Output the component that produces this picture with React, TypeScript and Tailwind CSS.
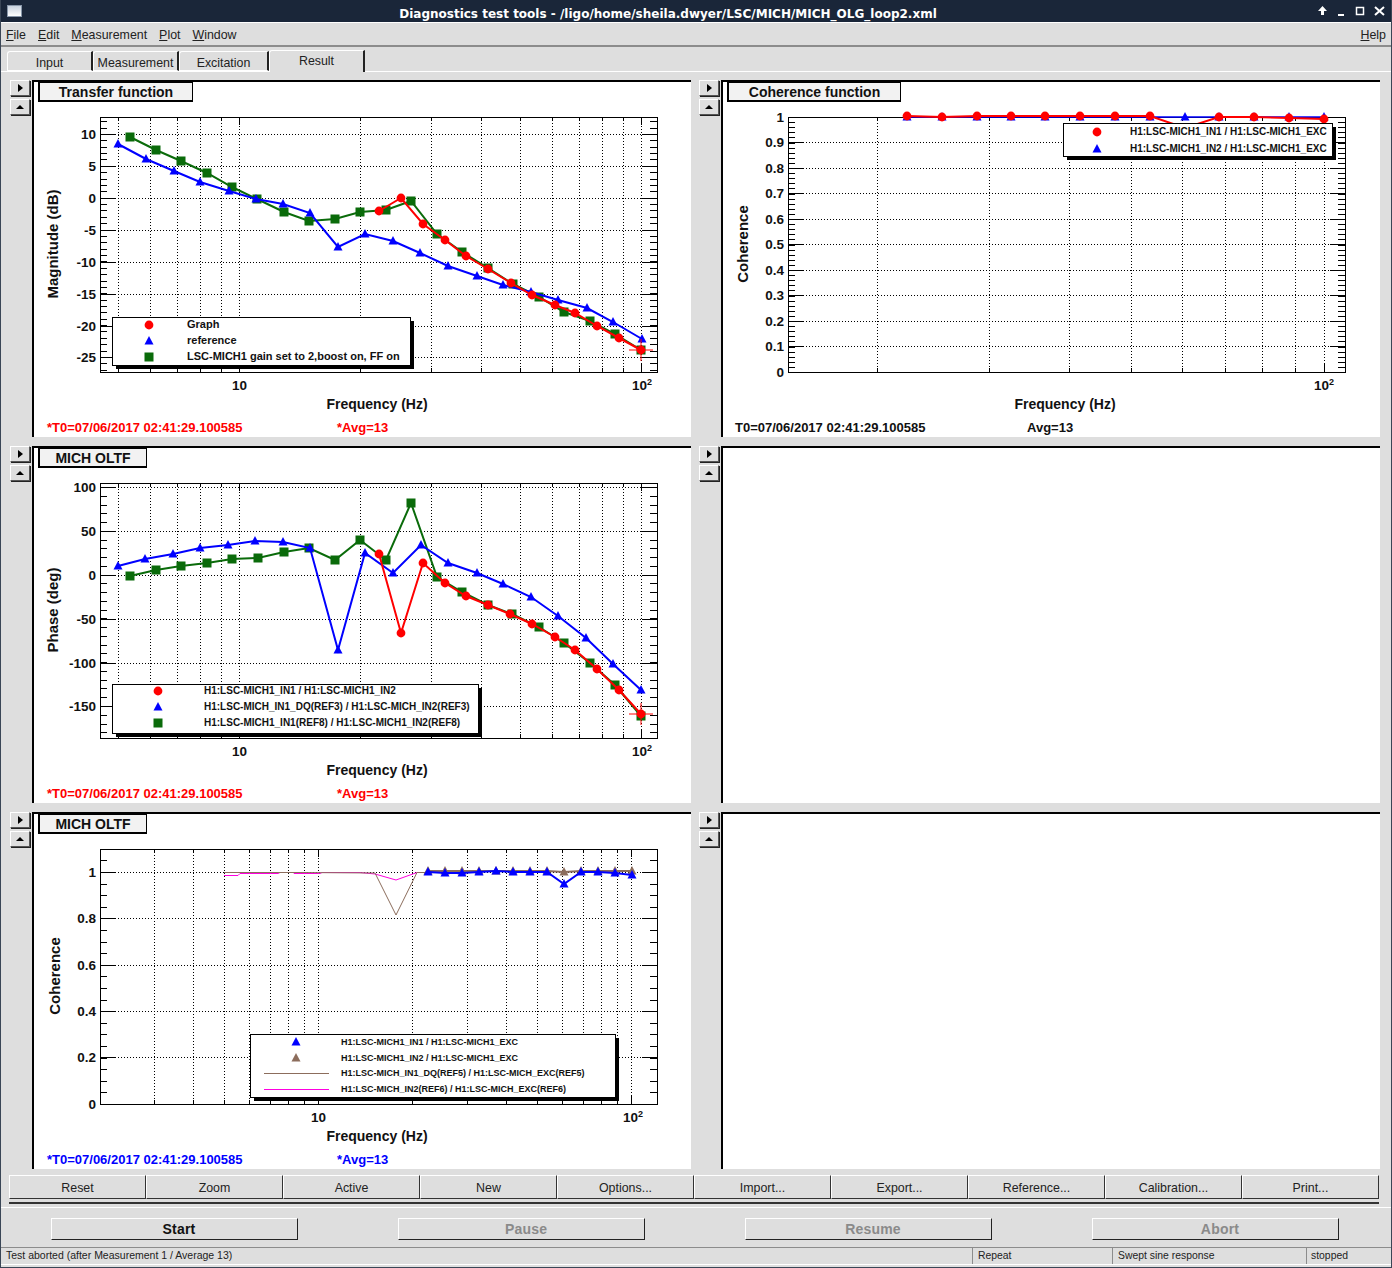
import React from "react"

type Pt = [number, number]
type Series = { color: string; points: Pt[]; marker?: "circle" | "triangle" | "square"; width?: number; cross?: boolean }
type LegendItem = { color: string; marker?: "circle" | "triangle" | "square"; text: string; y: number }

type ChartProps = {
  x0: number
  y0: number
  frameX: number
  frameY: number
  xVals: number[]
  x10: number
  decade: number
  xMajor: number[]
  yMajor: { y: number; label: string }[]
  ySub: number
  yTitle: string
  yTitleX: number
  xLabels: { x: number; y: number; text: string; sup?: boolean }[]
  xTitle: [number, number]
  series: Series[]
  legend: { x: number; y: number; w: number; h: number; markerX: number; textX: number; size: number; items: LegendItem[]; lines?: { y: number; color: string; text: string }[] }
  status: { color: string; t0: string; avg: string; t0X: number; avgX: number; y: number }
}

const W = 557
const H = 255

const Marker = ({ kind, x, y, color }: { kind?: string; x: number; y: number; color: string }) => {
  if (kind === "circle") return <circle cx={x} cy={y} r={4.4} fill={color} />
  if (kind === "square") return <rect x={x - 4.5} y={y - 4.5} width={9} height={9} fill={color} />
  if (kind === "triangle") return <polygon points={`${x},${y - 5} ${x + 4.5},${y + 3.5} ${x - 4.5},${y + 3.5}`} fill={color} />
  return null
}

const Chart = (p: ChartProps) => {
  const xPos = (v: number) => Math.round(p.x10 + Math.log10(v / 10) * p.decade)
  const right = p.frameX + W
  const bottom = p.frameY + H
  const minorY: number[] = []
  if (p.yMajor.length) {
    const first = p.yMajor[0].y
    for (let i = -6; i < 60; i++) {
      const y = first + i * p.ySub
      if (y >= p.frameY && y <= bottom) minorY.push(Math.round(y))
    }
  }
  return (
    <svg className="block" width={657} height={355} viewBox={`${p.x0} ${p.y0} 657 355`}>
      {/* grid */}
      <g stroke="#000" strokeWidth={1} strokeDasharray="1 2" shapeRendering="crispEdges">
        {p.xVals.map((v) => (
          <line key={v} x1={xPos(v)} x2={xPos(v)} y1={p.frameY} y2={bottom} />
        ))}
        {p.yMajor.map((m) => (
          <line key={m.label} x1={p.frameX} x2={right} y1={m.y} y2={m.y} />
        ))}
      </g>
      {/* ticks */}
      <g stroke="#000" strokeWidth={1} shapeRendering="crispEdges">
        {p.xVals.map((v) => {
          const len = p.xMajor.includes(v) ? 8 : 4
          return (
            <g key={v}>
              <line x1={xPos(v)} x2={xPos(v)} y1={p.frameY} y2={p.frameY + len} />
              <line x1={xPos(v)} x2={xPos(v)} y1={bottom} y2={bottom - len} />
            </g>
          )
        })}
        {minorY.map((y) => (
          <g key={y}>
            <line x1={p.frameX} x2={p.frameX + 7} y1={y} y2={y} />
            <line x1={right} x2={right - 7} y1={y} y2={y} />
          </g>
        ))}
        {p.yMajor.map((m) => (
          <g key={m.label}>
            <line x1={p.frameX} x2={p.frameX + 15} y1={m.y} y2={m.y} />
            <line x1={right} x2={right - 15} y1={m.y} y2={m.y} />
          </g>
        ))}
        <rect x={p.frameX} y={p.frameY} width={W} height={H} fill="none" />
      </g>
      {/* curves */}
      {p.series.map((s, i) => (
        <g key={i}>
          <polyline points={s.points.map((q) => q.join(",")).join(" ")} fill="none" stroke={s.color} strokeWidth={s.width ?? 2} />
          {s.marker && s.points.map((q, j) => <Marker key={j} kind={s.marker} x={q[0]} y={q[1]} color={s.color} />)}
          {s.cross && (
            <g stroke={s.color} strokeWidth={1}>
              <line x1={s.points[s.points.length - 1][0] - 12} x2={s.points[s.points.length - 1][0] + 12} y1={s.points[s.points.length - 1][1]} y2={s.points[s.points.length - 1][1]} />
              <line x1={s.points[s.points.length - 1][0]} x2={s.points[s.points.length - 1][0]} y1={s.points[s.points.length - 1][1] - 11} y2={s.points[s.points.length - 1][1] + 11} />
            </g>
          )}
        </g>
      ))}
      {/* legend */}
      <rect x={p.legend.x + 4} y={p.legend.y + 4} width={p.legend.w} height={p.legend.h} fill="#000" />
      <rect x={p.legend.x + 0.5} y={p.legend.y + 0.5} width={p.legend.w} height={p.legend.h} fill="#fff" stroke="#000" />
      {p.legend.items.map((it) => (
        <g key={it.text}>
          <Marker kind={it.marker} x={p.legend.markerX} y={it.y} color={it.color} />
          <text x={p.legend.textX} y={it.y + 3} className="font-bold" fontSize={p.legend.size} fill="#111">
            {it.text}
          </text>
        </g>
      ))}
      {p.legend.lines?.map((l) => (
        <g key={l.text}>
          <line x1={264} x2={329} y1={l.y + 0.5} y2={l.y + 0.5} stroke={l.color} strokeWidth={1} />
          <text x={p.legend.textX} y={l.y + 3} className="font-bold" fontSize={p.legend.size} fill="#111">
            {l.text}
          </text>
        </g>
      ))}
      {/* axis text */}
      {p.yMajor.map((m) => (
        <text key={m.label} x={p.frameX - 4} y={m.y + 5} textAnchor="end" className="font-bold" fontSize={13.5} fill="#111">
          {m.label}
        </text>
      ))}
      {p.xLabels.map((l) => (
        <text key={l.text} x={l.x} y={l.y} className="font-bold" fontSize={13.5} fill="#111">
          {l.text}
          {l.sup && (
            <tspan dy={-5} fontSize={9}>
              2
            </tspan>
          )}
        </text>
      ))}
      <text x={p.xTitle[0]} y={p.xTitle[1]} textAnchor="middle" className="font-bold" fontSize={14} fill="#111">
        Frequency (Hz)
      </text>
      <text transform={`translate(${p.yTitleX} ${p.frameY + 127}) rotate(-90)`} textAnchor="middle" className="font-bold" fontSize={15} fill="#111">
        {p.yTitle}
      </text>
      <text x={p.status.t0X} y={p.status.y} className="font-bold" fontSize={13} fill={p.status.color}>
        {p.status.t0}
      </text>
      <text x={p.status.avgX} y={p.status.y} className="font-bold" fontSize={13} fill={p.status.color}>
        {p.status.avg}
      </text>
    </svg>
  )
}

const X_LEFT = [5, 6, 7, 8, 9, 10, 20, 30, 40, 50, 60, 70, 80, 90, 100]
const T0 = "07/06/2017 02:41:29.100585"

const magnitude: ChartProps = {
  x0: 34, y0: 82, frameX: 100, frameY: 117, xVals: X_LEFT, x10: 239, decade: 402, xMajor: [10, 100],
  yMajor: [
    { y: 134, label: "10" }, { y: 166, label: "5" }, { y: 198, label: "0" }, { y: 230, label: "-5" },
    { y: 262, label: "-10" }, { y: 294, label: "-15" }, { y: 326, label: "-20" }, { y: 357, label: "-25" },
  ],
  ySub: 6.37, yTitle: "Magnitude (dB)", yTitleX: 58,
  xLabels: [{ x: 232, y: 390, text: "10" }, { x: 632, y: 390, text: "10", sup: true }],
  xTitle: [377, 409],
  series: [
    { color: "#0a6b0a", marker: "square", points: [[130,137],[156,150],[181,161],[207,173],[232,187],[257,199],[284,212],[309,221],[335,219],[360,212],[386,210],[411,201],[437,234],[462,252],[488,268],[513,284],[539,297],[564,312],[590,321],[615,334],[641,350]] },
    { color: "#0000ff", marker: "triangle", points: [[118,144],[146,159],[174,171],[200,182],[229,191],[256,199],[283,204],[310,213],[338,247],[365,234],[393,241],[420,253],[448,266],[477,276],[503,285],[531,292],[558,300],[587,308],[613,322],[642,339]] },
    { color: "#ff0000", marker: "circle", cross: true, points: [[379,211],[401,198],[423,224],[445,240],[466,256],[488,269],[511,283],[532,295],[555,305],[575,313],[597,326],[619,338],[641,350]] },
  ],
  legend: {
    x: 112, y: 317, w: 298, h: 48, markerX: 149, textX: 187, size: 11,
    items: [
      { color: "#ff0000", marker: "circle", text: "Graph", y: 325 },
      { color: "#0000ff", marker: "triangle", text: "reference", y: 341 },
      { color: "#0a6b0a", marker: "square", text: "LSC-MICH1 gain set to 2,boost on, FF on", y: 357 },
    ],
  },
  status: { color: "#ff0000", t0: "*T0=" + T0, avg: "*Avg=13", t0X: 47, avgX: 337, y: 432 },
}

const phase: ChartProps = {
  x0: 34, y0: 448, frameX: 100, frameY: 483, xVals: X_LEFT, x10: 239, decade: 402, xMajor: [10, 100],
  yMajor: [
    { y: 487, label: "100" }, { y: 531, label: "50" }, { y: 575, label: "0" },
    { y: 619, label: "-50" }, { y: 663, label: "-100" }, { y: 706, label: "-150" },
  ],
  ySub: 8.76, yTitle: "Phase (deg)", yTitleX: 58,
  xLabels: [{ x: 232, y: 756, text: "10" }, { x: 632, y: 756, text: "10", sup: true }],
  xTitle: [377, 775],
  series: [
    { color: "#0a6b0a", marker: "square", points: [[130,576],[156,570],[181,566],[207,563],[232,559],[258,558],[284,552],[309,548],[335,560],[360,540],[386,560],[411,503],[437,577],[462,592],[488,605],[512,614],[539,627],[564,643],[590,663],[615,685],[641,716]] },
    { color: "#0000ff", marker: "triangle", points: [[118,566],[145,559],[173,554],[200,548],[228,545],[255,541],[283,542],[310,548],[338,650],[365,553],[393,573],[421,545],[448,563],[477,573],[503,584],[531,597],[558,616],[586,638],[613,664],[641,690]] },
    { color: "#ff0000", marker: "circle", cross: true, points: [[379,554],[401,633],[423,563],[445,583],[466,596],[488,605],[510,614],[532,624],[555,637],[575,650],[597,669],[619,690],[641,714]] },
  ],
  legend: {
    x: 112, y: 684, w: 366, h: 49, markerX: 158, textX: 204, size: 10,
    items: [
      { color: "#ff0000", marker: "circle", text: "H1:LSC-MICH1_IN1 / H1:LSC-MICH1_IN2", y: 691 },
      { color: "#0000ff", marker: "triangle", text: "H1:LSC-MICH_IN1_DQ(REF3) / H1:LSC-MICH_IN2(REF3)", y: 707 },
      { color: "#0a6b0a", marker: "square", text: "H1:LSC-MICH1_IN1(REF8) / H1:LSC-MICH1_IN2(REF8)", y: 723 },
    ],
  },
  status: { color: "#ff0000", t0: "*T0=" + T0, avg: "*Avg=13", t0X: 47, avgX: 337, y: 798 },
}

const blueTop: Pt[] = [[428,872],[445,873],[462,873],[479,872],[496,871],[513,872],[530,872],[547,872],[564,884],[581,872],[598,872],[615,873],[632,875]]
const brownTop: Pt[] = blueTop.map((q, i) => [q[0], i === 8 ? 872 : 871])

const refCoherence: ChartProps = {
  x0: 34, y0: 814, frameX: 100, frameY: 849, xVals: [3, 4, 5, 6, 7, 8, 9, 10, 20, 30, 40, 50, 60, 70, 80, 90, 100], x10: 318, decade: 313, xMajor: [10, 100],
  yMajor: [
    { y: 872, label: "1" }, { y: 918, label: "0.8" }, { y: 965, label: "0.6" },
    { y: 1011, label: "0.4" }, { y: 1057, label: "0.2" }, { y: 1104, label: "0" },
  ],
  ySub: 11.6, yTitle: "Coherence", yTitleX: 60,
  xLabels: [{ x: 311, y: 1122, text: "10" }, { x: 623, y: 1122, text: "10", sup: true }],
  xTitle: [377, 1141],
  series: [
    { color: "#ff00e0", width: 1, points: [[224,875.5],[238,875.5],[240,873.5],[278,873.5],[280,872.5],[294,872.5],[294,873.5],[300,873.5],[305,873.5],[320,873.5],[322,872.5],[360,872.5],[375,874],[396,880],[417,872.5],[428,872.5]] },
    { color: "#8c6d5c", width: 1, points: [[224,872.5],[300,872.5],[375,873],[396,915],[417,872.5],[428,872.5]] },
    { color: "#8c6d5c", marker: "triangle", points: brownTop },
    { color: "#0000ff", marker: "triangle", points: blueTop },
  ],
  legend: {
    x: 250, y: 1034, w: 365, h: 63, markerX: 296, textX: 341, size: 9,
    items: [
      { color: "#0000ff", marker: "triangle", text: "H1:LSC-MICH1_IN1 / H1:LSC-MICH1_EXC", y: 1042 },
      { color: "#8c6d5c", marker: "triangle", text: "H1:LSC-MICH1_IN2 / H1:LSC-MICH1_EXC", y: 1058 },
    ],
    lines: [
      { y: 1073, color: "#8c6d5c", text: "H1:LSC-MICH_IN1_DQ(REF5) / H1:LSC-MICH_EXC(REF5)" },
      { y: 1089, color: "#ff00e0", text: "H1:LSC-MICH_IN2(REF6) / H1:LSC-MICH_EXC(REF6)" },
    ],
  },
  status: { color: "#0000ff", t0: "*T0=" + T0, avg: "*Avg=13", t0X: 47, avgX: 337, y: 1164 },
}

const cohX = [907, 942, 977, 1011, 1045, 1080, 1115, 1150, 1185, 1219, 1254, 1289, 1324]
const cohRed = [116, 117, 116, 116, 116, 116, 116, 116, 128, 117, 117, 118, 119]

const coherence: ChartProps = {
  x0: 723, y0: 82, frameX: 788, frameY: 117, xVals: [20, 30, 40, 50, 60, 70, 80, 90, 100], x10: 684, decade: 640, xMajor: [100],
  yMajor: ["1", "0.9", "0.8", "0.7", "0.6", "0.5", "0.4", "0.3", "0.2", "0.1", "0"].map((label, i) => ({ y: Math.floor(117 + i * 25.5), label })),
  ySub: 5.1, yTitle: "Coherence", yTitleX: 748,
  xLabels: [{ x: 1314, y: 390, text: "10", sup: true }],
  xTitle: [1065, 409],
  series: [
    { color: "#0000ff", marker: "triangle", width: 1.5, points: cohX.map((x): Pt => [x, 117]) },
    { color: "#ff0000", marker: "circle", width: 2, points: cohX.map((x, i): Pt => [x, cohRed[i]]) },
  ],
  legend: {
    x: 1063, y: 123, w: 269, h: 33, markerX: 1097, textX: 1130, size: 10,
    items: [
      { color: "#ff0000", marker: "circle", text: "H1:LSC-MICH1_IN1 / H1:LSC-MICH1_EXC", y: 132 },
      { color: "#0000ff", marker: "triangle", text: "H1:LSC-MICH1_IN2 / H1:LSC-MICH1_EXC", y: 149 },
    ],
  },
  status: { color: "#111", t0: "T0=" + T0, avg: "Avg=13", t0X: 735, avgX: 1027, y: 432 },
}

const ArrowBtn = ({ dir }: { dir: "right" | "up" }) => (
  <button className="w-5 h-4 flex items-center justify-center bg-[#dedede] border-t border-l border-white border-r border-b border-r-[#555] border-b-[#555] shadow-[1px_1px_0_#222]">
    <svg width="10" height="8" viewBox="0 0 10 8">
      <polygon points={dir === "right" ? "3,0 8,4 3,8" : "1,6 9,6 5,2"} fill="#000" />
    </svg>
  </button>
)

const Cell = ({ title, titleW, chart }: { title?: string; titleW?: string; chart?: ChartProps }) => (
  <div className="flex gap-[2px]">
    <div className="flex flex-col gap-[3px] w-5">
      <ArrowBtn dir="right" />
      <ArrowBtn dir="up" />
    </div>
    <div className="relative w-[659px] h-[357px] bg-white border-l-2 border-t-2 border-black">
      {chart && <Chart {...chart} />}
      {title && (
        <div className={`absolute left-[4px] top-0 h-5 ${titleW} bg-[#f2f2f2] border border-l-2 border-b-2 border-black flex items-center justify-center pt-[1px] font-bold text-[14px] text-[#111]`}>
          {title}
        </div>
      )}
    </div>
  </div>
)

const Tab = ({ label, w, active }: { label: string; w: string; active?: boolean }) => (
  <div
    className={`${w} flex justify-center rounded-tl-[3px] border-t border-l border-white border-r-2 border-r-[#222] text-[12.4px] text-[#222] ${
      active ? "h-[22px] pt-[1px] bg-[#dedede] -mb-px z-10" : "h-[20px] pt-[2px] border-b border-b-white"
    }`}
  >
    {label}
  </div>
)

const Menu = ({ first, rest }: { first: string; rest: string }) => (
  <span>
    <span className="underline">{first}</span>
    {rest}
  </span>
)

const toolButtons = ["Reset", "Zoom", "Active", "New", "Options...", "Import...", "Export...", "Reference...", "Calibration...", "Print..."]

const BigBtn = ({ label, disabled }: { label: string; disabled?: boolean }) => (
  <button className={`w-[247px] h-[22px] pl-[9px] pb-[2px] bg-[#dedede] border-t border-l border-white border-r border-b border-r-[#222] border-b-[#222] font-bold text-[14px] tracking-[0.2px] ${disabled ? "text-[#8a8a8a]" : "text-[#111]"}`}>
    {label}
  </button>
)

const App = () => {
  return (
    <div className="w-[1392px] h-[1268px] overflow-hidden bg-[#dedede] flex flex-col font-['Liberation_Sans',sans-serif] border-x border-[#3a4656]">
      {/* title bar */}
      <div className="relative h-[22px] bg-[#1a2639] flex items-center justify-center pr-[56px] pt-[5px] text-white font-bold text-[12px] font-['DejaVu_Sans',sans-serif] shrink-0">
        <div className="absolute left-[6px] top-[5px] w-[15px] h-[12px] bg-gradient-to-b from-[#c9d2de] to-white border border-[#8896a8]" />
        Diagnostics test tools - /ligo/home/sheila.dwyer/LSC/MICH/MICH_OLG_loop2.xml
        <div className="absolute right-[6px] top-[5px] flex items-center gap-[9px] text-white">
          <svg width="11" height="12" viewBox="0 0 11 12"><path d="M5.5 1 L10 6 L7 6 L7 10 L4 10 L4 6 L1 6 Z" fill="#fff" /></svg>
          <svg width="9" height="12" viewBox="0 0 9 12"><rect x="1" y="9" width="6" height="2" fill="#fff" /></svg>
          <svg width="10" height="12" viewBox="0 0 10 12"><rect x="1.5" y="2.5" width="7" height="7" fill="none" stroke="#fff" strokeWidth="1.5" /></svg>
          <svg width="11" height="12" viewBox="0 0 11 12"><path d="M1 2 L10 10 M10 2 L1 10" stroke="#fff" strokeWidth="2" /></svg>
        </div>
      </div>

      {/* menu */}
      <div className="h-[25px] shrink-0 border-t border-white border-b-2 border-b-[#8c8c8c] flex items-center justify-between pl-[5px] pr-[5px] pt-[2px] text-[12.4px] text-[#222]">
        <div className="flex gap-3">
          <Menu first="F" rest="ile" />
          <Menu first="E" rest="dit" />
          <Menu first="M" rest="easurement" />
          <Menu first="P" rest="lot" />
          <Menu first="W" rest="indow" />
        </div>
        <Menu first="H" rest="elp" />
      </div>

      {/* tabs */}
      <div className="h-[25px] shrink-0 flex items-end pl-[6px] gap-0 border-b border-white">
        <Tab label="Input" w="w-[86px]" />
        <Tab label="Measurement" w="w-[86px]" />
        <Tab label="Excitation" w="w-[90px]" />
        <Tab label="Result" w="w-[96px]" active />
      </div>

      {/* plot pads */}
      <div className="grid grid-cols-[681px_681px] gap-x-2 gap-y-[9px] pl-[9px] pt-2 shrink-0">
        <Cell title="Transfer function" titleW="w-[155px]" chart={magnitude} />
        <Cell title="Coherence function" titleW="w-[174px]" chart={coherence} />
        <Cell title="MICH OLTF" titleW="w-[109px]" chart={phase} />
        <Cell />
        <Cell title="MICH OLTF" titleW="w-[109px]" chart={refCoherence} />
        <Cell />
      </div>

      {/* plot buttons */}
      <div className="mt-[6px] ml-2 w-[1370px] h-[29px] shrink-0 flex items-start border-b-2 border-[#333]">
        {toolButtons.map((b) => (
          <button key={b} className="flex-1 h-6 pt-[2px] bg-[#dedede] border-t border-l border-white border-r border-b border-r-[#333] border-b-[#333] text-[12.4px] text-[#222]">
            {b}
          </button>
        ))}
      </div>

      {/* start / pause */}
      <div className="mt-[3px] h-[40px] shrink-0 border-t border-white flex items-start gap-[100px] pt-[10px] pl-[50px]">
        <BigBtn label="Start" />
        <BigBtn label="Pause" disabled />
        <BigBtn label="Resume" disabled />
        <BigBtn label="Abort" disabled />
      </div>

      {/* status */}
      <div className="h-[17px] shrink-0 flex border-t border-[#8c8c8c] text-[10.4px] leading-[15px] text-[#222]">
        <div className="w-[971px] pl-[5px] text-[10.5px]">Test aborted (after Measurement 1 / Average 13)</div>
        <div className="w-[140px] pl-[5px] border-l border-[#8c8c8c]">Repeat</div>
        <div className="w-[194px] pl-[5px] border-l border-[#8c8c8c]">Swept sine response</div>
        <div className="flex-1 pl-[4px] border-l border-[#8c8c8c]">stopped</div>
      </div>
      <div className="flex-1 border-t border-white border-b border-b-[#3a4656]" />
    </div>
  )
}

export default App
